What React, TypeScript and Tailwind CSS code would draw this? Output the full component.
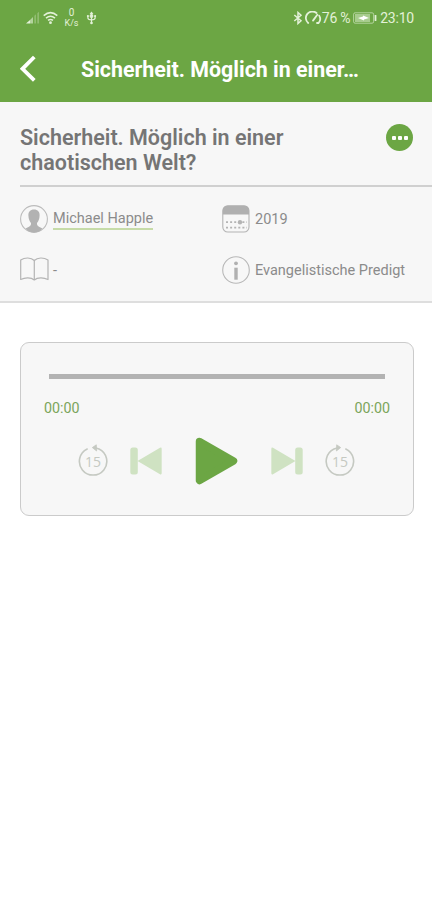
import React, { useState } from "react";

const StatusBar = () => {
  return (
    <div className="flex h-9 items-center pl-[25px] pr-[18px] text-[#e3f1d8]">
      <svg width="15" height="14" viewBox="0 0 15 14" fill="currentColor">
        <path d="M1 12.5 L5 9 V12.5 Z" />
        <path d="M5 9 L8 6 V12.5 H5 Z" opacity="0.6" />
        <path d="M9.3 4.8 L11 3.3 V12.5 H9.3 Z" opacity="0.3" />
        <path d="M12.3 2.2 L14 0.8 V12.5 H12.3 Z" opacity="0.3" />
      </svg>
      <svg
        className="ml-[3px]"
        width="15"
        height="14"
        viewBox="0 0 15 14"
        fill="none"
        stroke="currentColor"
        strokeWidth="1.5"
      >
        <path d="M0.7 4.6 Q7.5 -1.4 14.3 4.6" />
        <path d="M3 7.1 Q7.5 3.3 12 7.1" />
        <path d="M5 9.4 Q7.5 7.4 10 9.4" />
        <circle cx="7.5" cy="11.7" r="1.4" fill="currentColor" stroke="none" />
      </svg>
      <div className="ml-[6px] flex w-[15px] flex-col items-center text-[10px] leading-[11px]">
        <span>0</span>
        <span className="text-[9px]">K/s</span>
      </div>
      <svg
        className="ml-[7px]"
        width="11"
        height="14"
        viewBox="0 0 11 14"
        fill="none"
        stroke="currentColor"
        strokeWidth="1.2"
      >
        <path d="M5.5 1.5 V12" />
        <path d="M1.9 5 V7 Q1.9 8.8 5.5 8.8 Q9.1 8.8 9.1 7 V5" />
        <circle cx="5.5" cy="5" r="1.3" />
        <path d="M3.6 3 L5.5 0.4 L7.4 3 Z" fill="currentColor" stroke="none" />
        <circle cx="1.9" cy="5" r="1.1" fill="currentColor" stroke="none" />
        <circle cx="9.1" cy="5" r="1.1" fill="currentColor" stroke="none" />
        <circle cx="5.5" cy="12" r="1.3" fill="currentColor" stroke="none" />
      </svg>

      <div className="ml-auto flex items-center">
        <svg
          width="10"
          height="14"
          viewBox="0 0 10 14"
          fill="none"
          stroke="currentColor"
          strokeWidth="1.5"
        >
          <path d="M1.3 4 L8 9.8 L5 12.5 V1.5 L8 4.2 L1.3 10" />
        </svg>
        <svg
          className="ml-[2px]"
          width="17"
          height="14"
          viewBox="0 0 17 14"
          fill="none"
          stroke="currentColor"
          strokeWidth="1.8"
          strokeLinecap="round"
        >
          <path d="M3.2 12 A6.3 6.3 0 1 1 11.5 2" />
          <path d="M14.2 4.6 A6.3 6.3 0 0 1 13.6 12 L12 12" />
          <path d="M12.3 3.8 L8 9.6" />
        </svg>
        <span className="text-sm leading-4 tracking-[-0.3px]">76 %</span>
        <svg className="ml-[3px]" width="24" height="12" viewBox="0 0 24 12">
          <rect
            x="0.6"
            y="0.8"
            width="20"
            height="10.4"
            rx="1.5"
            fill="none"
            stroke="currentColor"
            opacity="0.6"
          />
          <rect x="2" y="2" width="15" height="8" fill="currentColor" opacity="0.5" />
          <path d="M5 6 L10 4.5 V3.5 L16 6 L11 7.5 V8.5 Z" fill="#fff" />
          <rect x="21.6" y="3" width="1.8" height="6" rx="0.6" fill="currentColor" />
        </svg>
        <span className="ml-[3px] text-sm leading-4 tracking-[-0.2px]">23:10</span>
      </div>
    </div>
  );
};

const Header = () => {
  return (
    <header className="h-[102px] bg-[#6ca644]">
      <StatusBar />
      <div className="flex h-[66px] items-center pl-5">
        <button aria-label="Zurück" className="text-white">
          <svg width="17" height="28" viewBox="0 0 17 28">
            <path
              d="M14.3 2 L2.5 13.8 L14.3 25.3"
              fill="none"
              stroke="currentColor"
              strokeWidth="3.8"
            />
          </svg>
        </button>
        <h1 className="ml-[44px] whitespace-nowrap pt-[3px] text-[21.4px] font-bold text-white">
          Sicherheit. Möglich in einer…
        </h1>
      </div>
    </header>
  );
};

const PersonIcon = () => (
  <svg width="28" height="28" viewBox="0 0 28 28" className="-mt-[2px]">
    <circle cx="14" cy="14" r="13.4" fill="none" stroke="#bcbcbc" strokeWidth="1.1" />
    <path
      d="M14 4.5 C17.8 4.5 19.8 7 19.6 10.5 C19.5 14 18.3 16.5 17 18 C16.8 20 17.5 21 19 21.7 L22.5 23.5 C20.5 26 17.5 27.4 14 27.4 C10.5 27.4 7.5 26 5.5 23.5 L9 21.7 C10.5 21 11.2 20 11 18 C9.7 16.5 8.5 14 8.4 10.5 C8.2 7 10.2 4.5 14 4.5 Z"
      fill="#b2b2b2"
    />
  </svg>
);

const CalendarIcon = () => (
  <svg width="28" height="28" viewBox="0 0 28 28" className="-mt-[2px]">
    <rect
      x="0.8"
      y="0.8"
      width="26.2"
      height="26.2"
      rx="5"
      fill="none"
      stroke="#b4b4b4"
      strokeWidth="1.1"
    />
    <path d="M0.8 9.5 V5.5 Q0.8 0.8 5.5 0.8 H22.5 Q27 0.8 27 5.5 V9.5 Z" fill="#b0b0b0" />
    <g fill="none" stroke="#b4b4b4" strokeWidth="1.8" strokeDasharray="2 2.1">
      <path d="M4 17.2 H25" />
      <path d="M4 22.7 H25" />
    </g>
    <circle cx="18" cy="17.2" r="2.2" fill="#b4b4b4" />
  </svg>
);

const BookIcon = () => (
  <svg
    width="29"
    height="24"
    viewBox="0 0 29 24"
    fill="none"
    stroke="#b4b4b4"
    strokeWidth="1.2"
    strokeLinejoin="round"
    className="-mt-[3px]"
  >
    <path d="M14.3 3.5 C11 0.3 5 0.2 0.7 3 V22.5 C5 20.3 11 20.2 14.3 23 C17.6 20.2 23.6 20.3 28 22.5 V3 C23.6 0.2 17.6 0.3 14.3 3.5 Z" />
    <path d="M14.3 3.5 V23" />
  </svg>
);

const InfoIcon = () => (
  <svg width="28" height="28" viewBox="0 0 28 28" className="-mt-[2px]">
    <circle cx="14" cy="14" r="13.3" fill="none" stroke="#b8b8b8" strokeWidth="1.1" />
    <circle cx="14" cy="7.3" r="1.9" fill="#b0b0b0" />
    <rect x="12.3" y="11.7" width="3.4" height="12" fill="#b0b0b0" />
  </svg>
);

const DetailItem = ({
  icon,
  children,
}: {
  icon: React.ReactNode;
  children: React.ReactNode;
}) => (
  <div className="flex h-[51px] items-center">
    <div className="flex w-[33px] shrink-0 items-center">{icon}</div>
    <div className="pt-px">{children}</div>
  </div>
);

const SkipIcon = ({ forward = false }: { forward?: boolean }) => (
  <svg width="30" height="34" viewBox="0 0 30 34">
    <g
      transform={forward ? "translate(30 0) scale(-1 1)" : undefined}
      fill="none"
      stroke="#c5c9c2"
      strokeWidth="1.6"
    >
      <path d="M9.2 6 A13.7 13.7 0 1 0 21 6 L17 4.8" strokeLinecap="round" />
      <path d="M18.3 1.8 L14.3 4.6 L18.6 8 Z" fill="#c5c9c2" strokeWidth="0.8" />
    </g>
    <text
      x="15"
      y="23.5"
      textAnchor="middle"
      fontSize="14"
      fill="#c5c9c2"
      className="font-['Open_Sans',sans-serif]"
    >
      15
    </text>
  </svg>
);

const TrackIcon = ({ next = false }: { next?: boolean }) => (
  <svg width="32" height="28" viewBox="0 0 32 28">
    <g transform={next ? "translate(32 0) scale(-1 1)" : undefined} fill="#cfe2c2">
      <rect x="0.3" y="0.5" width="7.5" height="27" rx="2.5" />
      <path d="M7.5 14 L30 0.8 Q31.7 0 31.7 2 V26 Q31.7 28 30 27.2 Z" />
    </g>
  </svg>
);

const Player = () => {
  const [playing, setPlaying] = useState(false);

  return (
    <section className="mx-5 mt-[39px] h-[174px] w-[394px] rounded-[9px] border-[1.5px] border-[#cbcbcb] bg-[#f7f7f7]">
      <div className="ml-[28px] mt-[31px] h-[5px] w-[336px] bg-[#b3b3b3]"></div>
      <div className="mt-[19px] flex justify-between pl-[23px] pr-[23px] text-[14.3px] leading-5 text-[#7ba55b]">
        <span>00:00</span>
        <span>00:00</span>
      </div>
      <div className="mt-[18px] flex h-[50px] items-center pl-[57px]">
        <button aria-label="15 Sekunden zurück" className="-mt-[2px]">
          <SkipIcon />
        </button>
        <button aria-label="Vorheriger Titel" className="ml-[22px]">
          <TrackIcon />
        </button>
        <button
          aria-label="Abspielen"
          onClick={() => setPlaying(!playing)}
          className="ml-[33px]"
        >
          <svg width="43" height="48" viewBox="0 0 43 48">
            <path
              d="M4.5 4.5 L38.5 24 L4.5 43.5 Z"
              fill="#6ca644"
              stroke="#6ca644"
              strokeWidth="7.5"
              strokeLinejoin="round"
            />
          </svg>
        </button>
        <button aria-label="Nächster Titel" className="ml-[33px]">
          <TrackIcon next />
        </button>
        <button aria-label="15 Sekunden vor" className="-mt-[2px] ml-[22px]">
          <SkipIcon forward />
        </button>
      </div>
    </section>
  );
};

const App = () => {
  return (
    <div className="h-[900px] w-[432px] overflow-hidden bg-white font-['Roboto',sans-serif]">
      <Header />
      <main>
        <section className="h-[201px] border-b-2 border-[#dedede] bg-[#f7f7f7] pl-5">
          <div className="flex h-[83px] justify-between pt-[22px]">
            <h2 className="w-[290px] pt-px text-[21.5px] font-semibold leading-[25px] text-[#757575]">
              Sicherheit. Möglich in einer chaotischen Welt?
            </h2>
            <button
              aria-label="Mehr"
              className="mr-[19px] flex h-[27px] w-[27px] items-center justify-center gap-[2px] rounded-full bg-[#6ca644]"
            >
              <span className="h-[4px] w-[4px] rounded-[1px] bg-white"></span>
              <span className="h-[4px] w-[4px] rounded-[1px] bg-white"></span>
              <span className="h-[4px] w-[4px] rounded-[1px] bg-white"></span>
            </button>
          </div>
          <div className="h-[2px] bg-[#d0d0d0]"></div>
          <div className="grid grid-cols-[202px_1fr] pt-[7px] text-[14.5px] text-[#8b8b8b]">
            <DetailItem icon={<PersonIcon />}>
              <a href="#" className="block border-b-2 border-[#c6dba8] leading-[18px]">
                Michael Happle
              </a>
            </DetailItem>
            <DetailItem icon={<CalendarIcon />}>2019</DetailItem>
            <DetailItem icon={<BookIcon />}>-</DetailItem>
            <DetailItem icon={<InfoIcon />}>
              <span className="whitespace-nowrap">Evangelistische Predigt</span>
            </DetailItem>
          </div>
        </section>
        <Player />
      </main>
    </div>
  );
};

export default App;
